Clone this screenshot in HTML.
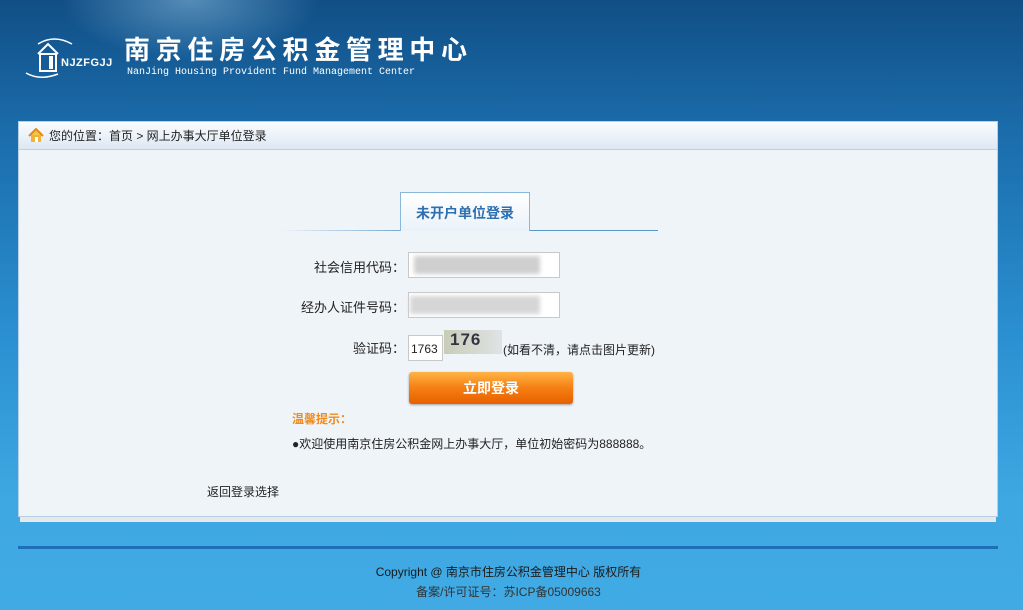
<!DOCTYPE html>
<html><head><meta charset="utf-8"><style>
*{margin:0;padding:0;box-sizing:border-box}
body{width:1023px;height:610px;overflow:hidden;font-family:"Liberation Sans","Noto Sans CJK SC",sans-serif;font-size:12px;color:#222;
background:linear-gradient(180deg,#114f86 0px,#1a6aa8 120px,#2a8fd0 330px,#3ea8e2 500px,#41aae4 610px);position:relative}
.glow{position:absolute;left:60px;top:-60px;width:260px;height:120px;border-radius:50%;background:radial-gradient(ellipse,rgba(140,190,225,.55),rgba(140,190,225,0) 70%)}
.abs{position:absolute}
.panel{position:absolute;left:18px;top:121px;width:980px;height:396px;background:#eff4f9;border:1px solid #b9cfe4}
.crumb{height:28px;background:linear-gradient(#fafcfe,#dde8f3);border-bottom:1px solid #b9cfe4;padding-left:30px;line-height:28px;font-size:12px;color:#222}
.shadow{position:absolute;left:20px;top:517px;width:976px;height:5px;background:#e6e9ec}
.lbl{position:absolute;text-align:right;width:130px;font-size:13px;color:#222}
.inp{position:absolute;background:#fff;border:1px solid #c8c8c8}
.blur{position:absolute;background:#cfcfcf;filter:blur(2px)}
</style></head><body>
<div class="glow"></div>
<svg class="abs" style="left:24px;top:36px" width="60" height="44" viewBox="0 0 60 44">
<path d="M14 8 Q30 -2 48 8" stroke="#fff" stroke-width="1.5" fill="none"/>
<path d="M2 37 Q16 45 34 38" stroke="#fff" stroke-width="1.5" fill="none"/>
<path d="M14 18 L24 8 L34 18" stroke="#fff" stroke-width="2" fill="none"/>
<rect x="16" y="18" width="16" height="17" stroke="#fff" stroke-width="2" fill="none"/>
<rect x="25" y="20" width="4" height="13" fill="#fff"/>
</svg>
<div class="abs" style="left:61px;top:57px;color:#fff;font-weight:bold;font-size:11px;letter-spacing:.5px">NJZFGJJ</div>
<div class="abs" style="left:124px;top:33px;color:#fff;font-size:26px;font-weight:bold;letter-spacing:5.7px;font-family:'Noto Sans CJK SC',sans-serif;line-height:32px">南京住房公积金管理中心</div>
<div class="abs" style="left:127px;top:67px;color:#fff;font-size:10px;font-family:'Liberation Mono',monospace">NanJing Housing Provident Fund Management Center</div>

<div class="panel">
<div class="crumb">您的位置：首页 &gt; 网上办事大厅单位登录</div>
<svg class="abs" style="left:9px;top:6px" width="16" height="15" viewBox="0 0 16 15"><path d="M1 8 L8 1 L15 8" stroke="#e08a1c" stroke-width="2" fill="#f6c44a"/><rect x="3" y="7" width="10" height="7" fill="#f3b233"/><rect x="7" y="9" width="3" height="5" fill="#fff"/></svg>
</div>
<div class="shadow"></div>

<div class="abs" style="left:280px;top:230px;width:378px;height:1px;background:linear-gradient(90deg,rgba(90,150,200,0),#5a96c8 40%)"></div>
<div class="abs" style="left:400px;top:192px;width:130px;height:39px;border:1px solid #8ab7dc;border-bottom:none;background:linear-gradient(#fff,#eaf2f9);color:#2d6fb0;font-size:14px;font-weight:bold;text-align:center;line-height:40px">未开户单位登录</div>

<div class="lbl" style="left:275px;top:257px">社会信用代码：</div>
<div class="inp" style="left:408px;top:252px;width:152px;height:26px"></div>
<div class="blur" style="left:414px;top:256px;width:126px;height:18px"></div>
<div class="lbl" style="left:275px;top:297px">经办人证件号码：</div>
<div class="inp" style="left:408px;top:292px;width:152px;height:26px"></div>
<div class="blur" style="left:410px;top:296px;width:130px;height:18px;background:#d6d6d6"></div>
<div class="lbl" style="left:275px;top:338px">验证码：</div>
<div class="inp" style="left:408px;top:335px;width:35px;height:26px;font-size:12px;line-height:26px;padding-left:2px">1763</div>
<div class="abs" style="left:444px;top:330px;width:58px;height:24px;background:linear-gradient(90deg,#c8cdb8,#dfe3e4);font-size:17px;font-weight:bold;color:#334;padding-left:6px;letter-spacing:1px">176</div>
<div class="abs" style="left:503px;top:341px;font-size:12px">(如看不清，请点击图片更新)</div>

<div class="abs" style="left:409px;top:372px;width:164px;height:32px;border-radius:3px;background:linear-gradient(#ffb347,#f57f12 50%,#e85f00);box-shadow:0 1px 2px rgba(0,0,0,.35);color:#fff;font-size:14px;font-weight:bold;text-align:center;line-height:32px">立即登录</div>
<div class="abs" style="left:292px;top:410px;color:#f08a1c;font-size:12px;font-weight:bold">温馨提示：</div>
<div class="abs" style="left:292px;top:435px;font-size:12px">●欢迎使用南京住房公积金网上办事大厅，单位初始密码为888888。</div>
<div class="abs" style="left:207px;top:483px;font-size:12px">返回登录选择</div>

<div class="abs" style="left:18px;top:546px;width:980px;height:3px;background:#1f6eb8"></div>
<div class="abs" style="left:0;top:563px;width:1017px;text-align:center;font-size:12px;color:#1a1a1a">Copyright @ 南京市住房公积金管理中心 版权所有</div>
<div class="abs" style="left:0;top:583px;width:1017px;text-align:center;font-size:12px;color:#333">备案/许可证号：苏ICP备05009663</div>
</body></html>
